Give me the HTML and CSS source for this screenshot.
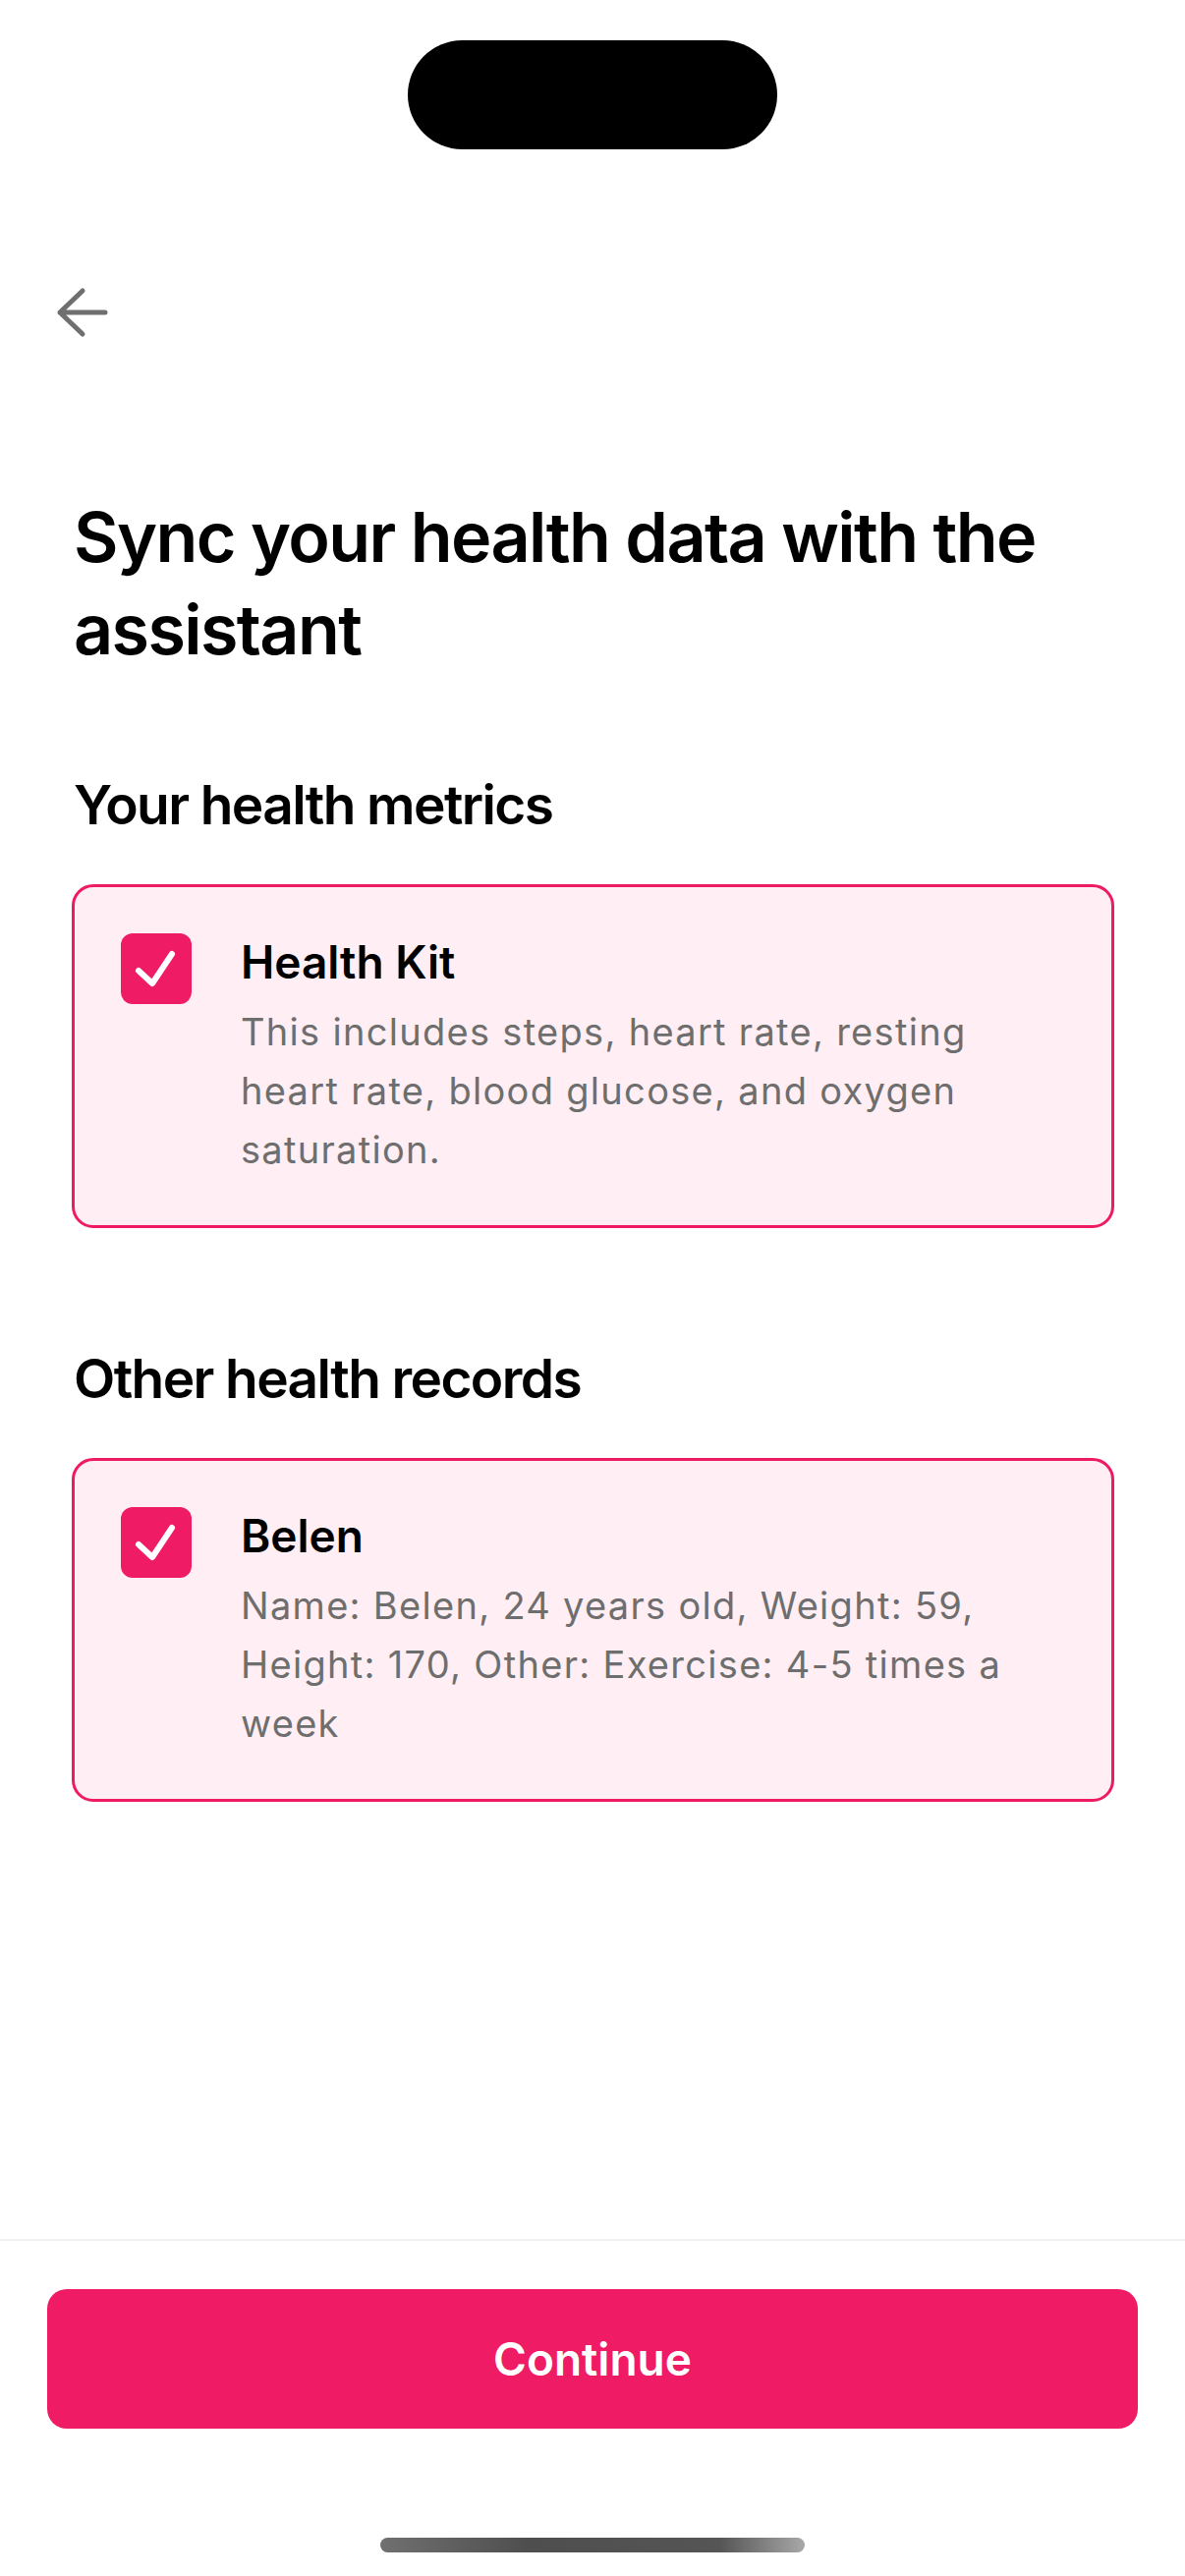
FILE: index.html
```html
<!DOCTYPE html>
<html lang="en">
<head>
<meta charset="utf-8">
<title>Sync your health data</title>
<link rel="stylesheet" href="styles.css">
</head>
<body>
<div class="screen">
  <div class="status">
    <div class="notch"></div>
  </div>
  <div class="nav">
    <svg class="back" width="60" height="60" viewBox="0 0 60 60" aria-label="Back">
      <path d="M7 30 H53 M30 8 L7 30 L30 52" fill="none" stroke="#6f6f6f" stroke-width="5" stroke-linecap="round" stroke-linejoin="round"/>
    </svg>
  </div>
  <main class="content">
    <h1 class="title">Sync your health data with the assistant</h1>

    <section class="section">
      <h2 class="section-title">Your health metrics</h2>
      <div class="card">
        <div class="checkbox">
          <svg width="72" height="72" viewBox="0 0 72 72"><path d="M18 38 L32 51 L52 21" fill="none" stroke="#fff" stroke-width="6" stroke-linecap="round" stroke-linejoin="round"/></svg>
        </div>
        <div class="card-body">
          <div class="card-title">Health Kit</div>
          <p class="card-desc">This includes steps, heart rate, resting heart rate, blood glucose, and oxygen saturation.</p>
        </div>
      </div>
    </section>

    <section class="section section-second">
      <h2 class="section-title">Other health records</h2>
      <div class="card">
        <div class="checkbox">
          <svg width="72" height="72" viewBox="0 0 72 72"><path d="M18 38 L32 51 L52 21" fill="none" stroke="#fff" stroke-width="6" stroke-linecap="round" stroke-linejoin="round"/></svg>
        </div>
        <div class="card-body">
          <div class="card-title">Belen</div>
          <p class="card-desc">Name: Belen, 24 years old, Weight: 59, Height: 170, Other: Exercise: 4-5 times a week</p>
        </div>
      </div>
    </section>
  </main>
  <footer class="footer">
    <button class="continue">Continue</button>
    <div class="home-indicator"></div>
  </footer>
</div>
</body>
</html>
```

FILE: styles.css
```css
* { box-sizing: border-box; }
html, body {
  margin: 0;
  padding: 0;
  background: #ffffff;
}
body {
  font-family: Inter, "Noto Sans", "Liberation Sans", sans-serif;
  color: #000;
}
.screen {
  width: 1206px;
  height: 2622px;
  display: flex;
  flex-direction: column;
  overflow: hidden;
}
.status {
  height: 152px;
  display: flex;
  justify-content: center;
  padding-top: 41px;
}
.notch {
  width: 376px;
  height: 111px;
  background: #000;
  border-radius: 56px;
}
.nav {
  height: 348px;
  padding-left: 54px;
  padding-top: 136px;
}
.back { display: block; }
.content {
  flex: 1;
  padding: 0 72px 0 73px;
}
.title {
  margin: 0;
  font-size: 70px;
  line-height: 94px;
  font-weight: 600;
  letter-spacing: -1.6px;
  padding-left: 2px;
}
.section { margin-top: 97px; }
.section-second { margin-top: 119px; }
.section-title {
  margin: 0 0 47px 2px;
  font-size: 55px;
  line-height: 68px;
  font-weight: 600;
  letter-spacing: -1.6px;
}
.card {
  display: flex;
  align-items: flex-start;
  gap: 50px;
  border: 3px solid #ee1b63;
  border-radius: 22px;
  background: #ffeff4;
  padding: 47px;
  width: 1061px;
}
.checkbox {
  flex: none;
  width: 72px;
  height: 72px;
  border-radius: 12px;
  background: #ef1b64;
}
.checkbox svg { display: block; }
.card-body {
  flex: 1;
  padding-right: 20px;
}
.card-title {
  font-size: 46px;
  line-height: 58px;
  font-weight: 600;
}
.card-desc {
  margin: 12px 0 0;
  font-size: 38px;
  line-height: 60px;
  letter-spacing: 1.3px;
  color: #6e6e6e;
}
.footer {
  flex: none;
  border-top: 2px solid #f0f0f0;
  padding: 49px 48px 24px;
  display: flex;
  flex-direction: column;
  align-items: center;
}
.continue {
  width: 1110px;
  height: 142px;
  border: none;
  border-radius: 20px;
  background: #ef1b64;
  color: #fff;
  font-family: Inter, "Noto Sans", "Liberation Sans", sans-serif;
  font-size: 46px;
  font-weight: 600;
}
.home-indicator {
  margin-top: 111px;
  width: 432px;
  height: 15px;
  border-radius: 8px;
  background: linear-gradient(90deg, #707070 0%, #4e4e4e 35%, #555 80%, #a8a8a8 100%);
}
```
